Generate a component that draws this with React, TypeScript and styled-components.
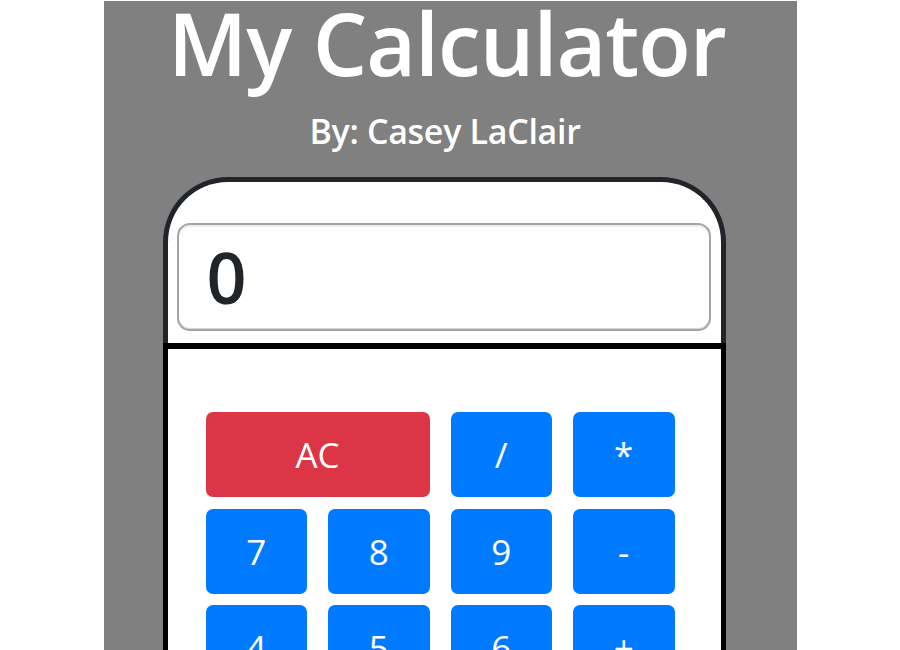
import React from "react";
import styled, { createGlobalStyle } from "styled-components";

const Global = createGlobalStyle`
  html, body { margin: 0; padding: 0; background: #ffffff; }
  body { font-family: "Open Sans", "Noto Sans", "Liberation Sans", sans-serif; }
`;

const Page = styled.div`
  display: flex;
  justify-content: center;
  padding-top: 1px;
`;

const Column = styled.main`
  width: 693px;
  min-height: 700px;
  background: #808080;
  display: flex;
  flex-direction: column;
  align-items: center;
`;

const Title = styled.h1`
  margin: 0;
  color: #ffffff;
  font-size: 86px;
  font-weight: 600;
  line-height: 84px;
  letter-spacing: -1px;
  transform: translateX(-3px);
`;

const Subtitle = styled.h2`
  margin: 26px 0 0;
  color: #ffffff;
  font-size: 34px;
  font-weight: 600;
  line-height: 40px;
  letter-spacing: -0.3px;
  transform: translateX(-5px);
`;

const Calculator = styled.section`
  margin-top: 26px;
  width: 563px;
  transform: translateX(-6px);
  display: flex;
  flex-direction: column;
`;

const Screen = styled.div`
  border: 5px solid #212529;
  border-bottom: none;
  border-radius: 65px 65px 0 0;
  background: #ffffff;
  padding: 41px 10px 12px 9px;
`;

const Display = styled.div`
  height: 104px;
  border: 2px solid #a4a4a4;
  border-radius: 13px;
  box-shadow: inset 0 2px 1px #ececec, inset 0 -1px 0 #d8d8d8;
  display: flex;
  align-items: center;
  padding-left: 28px;
  font-size: 70px;
  font-weight: 600;
  color: #212529;
`;

const Keypad = styled.div`
  border: 5px solid #000000;
  border-top-width: 6px;
  border-bottom: none;
  background: #ffffff;
  padding: 63px 46px 40px 38px;
  display: grid;
  grid-template-columns: repeat(4, 1fr);
  column-gap: 21px;
  row-gap: 11.5px;
`;

const Key = styled.button<{ $tone?: "blue" | "red"; $span?: number }>`
  grid-column: span ${(p) => p.$span ?? 1};
  height: 85px;
  border: none;
  border-radius: 7px;
  background: ${(p) => (p.$tone === "red" ? "#dc3545" : "#007bff")};
  color: #ffffff;
  font-family: inherit;
  font-size: 35px;
  font-weight: 400;
  cursor: pointer;
  padding: 0;
`;

const keys: { label: string; tone?: "blue" | "red"; span?: number }[] = [
  { label: "AC", tone: "red", span: 2 },
  { label: "/" },
  { label: "*" },
  { label: "7" },
  { label: "8" },
  { label: "9" },
  { label: "-" },
  { label: "4" },
  { label: "5" },
  { label: "6" },
  { label: "+" },
  { label: "1" },
  { label: "2" },
  { label: "3" },
  { label: "=" },
  { label: "0", span: 2 },
  { label: "." },
];

export default function App() {
  return (
    <>
      <Global />
      <Page>
        <Column>
          <Title>My Calculator</Title>
          <Subtitle>By: Casey LaClair</Subtitle>
          <Calculator>
            <Screen>
              <Display>0</Display>
            </Screen>
            <Keypad>
              {keys.map((k) => (
                <Key key={k.label} $tone={k.tone} $span={k.span}>
                  {k.label}
                </Key>
              ))}
            </Keypad>
          </Calculator>
        </Column>
      </Page>
    </>
  );
}
